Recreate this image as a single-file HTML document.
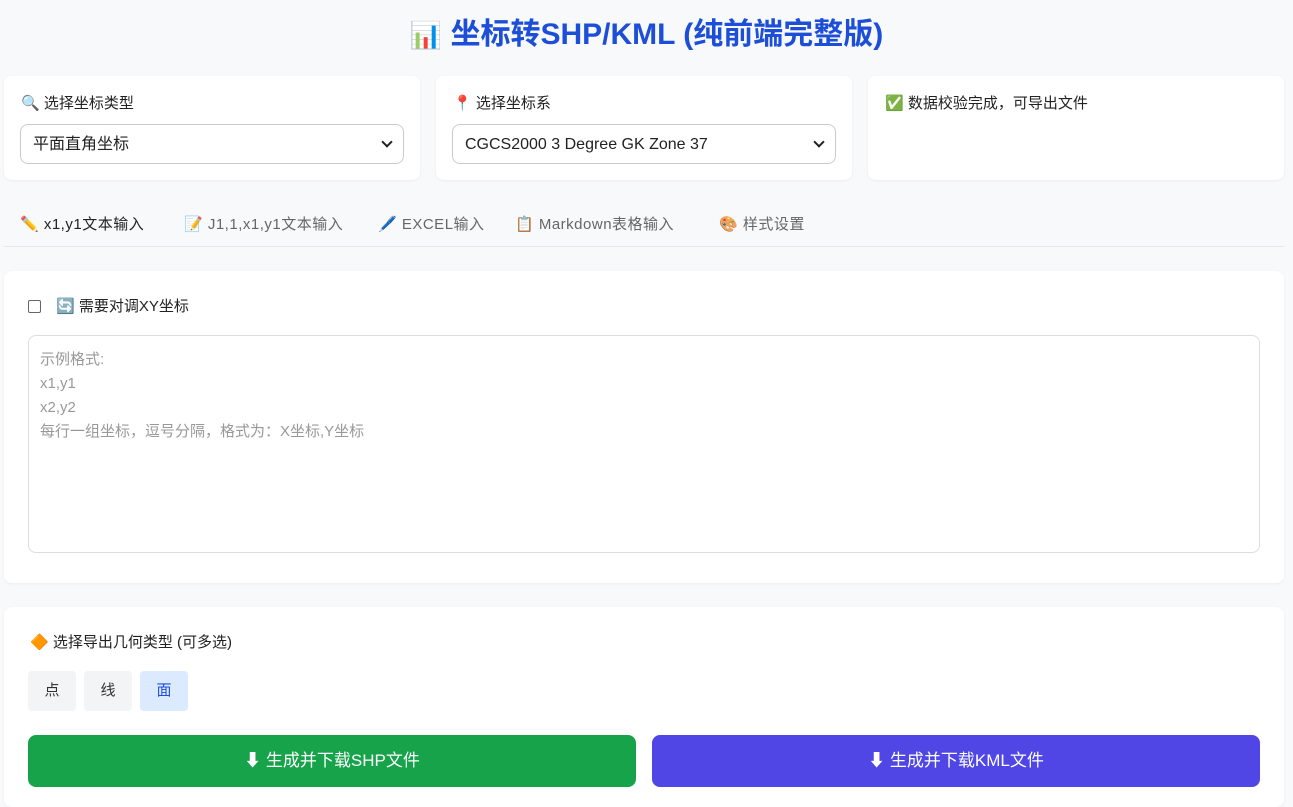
<!DOCTYPE html>
<html><head><meta charset="utf-8"><style>
*{box-sizing:border-box;margin:0;padding:0}
body{width:1293px;height:799px;overflow:hidden;background:#f8f9fb;font-family:"Liberation Sans","Noto Sans CJK SC",sans-serif;color:#222;position:relative}
.a{position:absolute}
h1{position:absolute;top:14px;left:0;width:1293px;text-align:center;font-size:30px;font-weight:bold;color:#1d4ed8;line-height:42px}
.card{position:absolute;background:#fff;border-radius:8px;box-shadow:0 1px 3px rgba(0,0,0,.05)}
.lbl{position:absolute;font-size:15px;line-height:20px}
.sel{position:absolute;height:40px;border:1px solid #ccc;border-radius:8px;font-size:16px;line-height:40px;padding-left:12px;background:#fff}
.sel:after{content:"";position:absolute;right:12px;top:13px;width:6px;height:6px;border-right:2px solid #222;border-bottom:2px solid #222;transform:rotate(45deg)}
.tab{position:absolute;top:214px;font-size:15px;line-height:22px;color:#666;letter-spacing:0.5px}
.gb{position:absolute;top:671px;width:48px;height:40px;border-radius:4px;background:#f3f4f6;font-size:15px;line-height:40px;text-align:center;color:#333}
.big{position:absolute;top:735px;height:52px;border-radius:8px;color:#fff;font-size:17px;line-height:52px;text-align:center;width:608px}
</style></head><body>
<h1><span style="font-size:26px">📊</span> 坐标转SHP/KML (纯前端完整版)</h1>
<div class="card" style="left:4px;top:76px;width:416px;height:104px"></div>
<div class="card" style="left:436px;top:76px;width:416px;height:104px"></div>
<div class="card" style="left:868px;top:76px;width:416px;height:104px"></div>
<div class="lbl" style="left:21px;top:94px">🔍 选择坐标类型</div>
<div class="sel" style="left:20px;top:124px;width:384px">平面直角坐标</div>
<div class="lbl" style="left:453px;top:94px">📍 选择坐标系</div>
<div class="sel" style="left:452px;top:124px;width:384px">CGCS2000 3 Degree GK Zone 37</div>
<div class="lbl" style="left:885px;top:94px">✅ 数据校验完成，可导出文件</div>
<div class="tab" style="left:20px;color:#222">✏️ x1,y1文本输入</div>
<div class="tab" style="left:184px">📝 J1,1,x1,y1文本输入</div>
<div class="tab" style="left:378px">🖊️ EXCEL输入</div>
<div class="tab" style="left:515px">📋 Markdown表格输入</div>
<div class="tab" style="left:719px">🎨 样式设置</div>
<div class="a" style="left:4px;top:246px;width:1280px;height:1px;background:#e5e7eb"></div>
<div class="card" style="left:4px;top:271px;width:1280px;height:312px"></div>
<div class="a" style="left:28px;top:300px;width:13px;height:13px;border:1px solid #666;border-radius:2px;background:#fff"></div>
<div class="lbl" style="left:56px;top:297px">🔄 需要对调XY坐标</div>
<div class="a" style="left:28px;top:335px;width:1232px;height:218px;border:1px solid #ddd;border-radius:8px;padding:12px 11px;font-size:15px;line-height:24px;color:#999">示例格式:<br>x1,y1<br>x2,y2<br>每行一组坐标，逗号分隔，格式为：X坐标,Y坐标</div>
<div class="card" style="left:4px;top:607px;width:1280px;height:200px"></div>
<div class="lbl" style="left:30px;top:633px">🔶 选择导出几何类型 (可多选)</div>
<div class="gb" style="left:28px">点</div>
<div class="gb" style="left:84px">线</div>
<div class="gb" style="left:140px;background:#dbeafe;color:#1d4ed8">面</div>
<div class="big" style="left:28px;background:#16a34a">⬇ 生成并下载SHP文件</div>
<div class="big" style="left:652px;background:#4f46e5">⬇ 生成并下载KML文件</div>
</body></html>
